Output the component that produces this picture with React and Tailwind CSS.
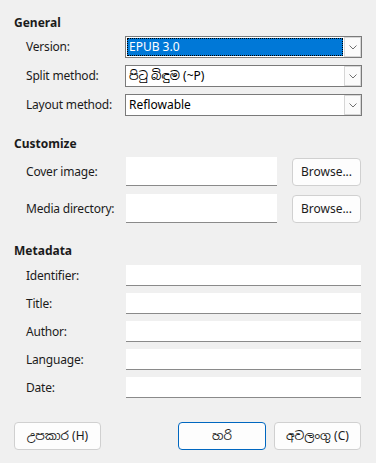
import React from "react";

const font = { fontFamily: '"Noto Sans", "Noto Sans Sinhala", "Liberation Sans", sans-serif' };

function Chevron() {
  return (
    <svg width="8" height="5" viewBox="0 0 8 5" className="block">
      <path d="M0.5 0.5 L4 4 L7.5 0.5" fill="none" stroke="#707070" strokeWidth="1" />
    </svg>
  );
}

function Combo({ value, selected }) {
  return (
    <div className="flex h-[22px] w-[237px] shrink-0 border border-[#7a7a7a] bg-white">
      <div className="flex flex-1 p-px">
        {selected ? (
          <div className="flex flex-1 items-center border border-dotted border-black bg-[#0078d7] pl-[1px] text-white">
            {value}
          </div>
        ) : (
          <div className="flex flex-1 items-center pl-[2px] text-black">{value}</div>
        )}
      </div>
      <div className="flex w-[17px] items-center justify-center border-y border-r border-l border-[#d6d6d6] bg-[#fbfbfb]">
        <Chevron />
      </div>
    </div>
  );
}

function Row({ label, children }) {
  return (
    <div className="flex items-center">
      <div className="w-[125px] shrink-0 whitespace-nowrap pl-[26px] text-[12px] tracking-[-0.2px] text-[#1b1b1b]">
        {label}
      </div>
      {children}
    </div>
  );
}

function Input({ w, h }) {
  return <div className={`${w} ${h} shrink-0 border-b border-[#8a8a8a] bg-white`} />;
}

function Btn({ children, w, primary }) {
  return (
    <div
      className={`flex h-[28px] ${w} shrink-0 items-center justify-center whitespace-nowrap rounded-[4px] border text-[12px] ${
        primary ? "border-[#0067c0] bg-[#fdfdfd]" : "border-[#d0d0d0] bg-[#fdfdfd]"
      } text-[#1b1b1b]`}
    >
      {children}
    </div>
  );
}

export default function App() {
  return (
    <div className="h-[463px] w-[376px] overflow-hidden bg-[#f0f0f0] text-[12px] leading-[16px] text-[#1b1b1b]" style={font}>
      <div className="flex flex-col pt-[15px]">
        <div className="pl-[14px] font-bold">General</div>
        <div className="mt-[5px] flex flex-col gap-[7px]">
          <Row label="Version:">
            <Combo value="EPUB 3.0" selected />
          </Row>
          <Row label="Split method:">
            <Combo value="පිටු බිඳුම (~P)" />
          </Row>
          <Row label="Layout method:">
            <Combo value="Reflowable" />
          </Row>
        </div>

        <div className="mt-[20px] pl-[14px] font-bold">Customize</div>
        <div className="mt-[5px] flex flex-col gap-[8px]">
          <Row label="Cover image:">
            <Input w="w-[151px] ml-[1px]" h="h-[29px]" />
            <div className="ml-[15px]">
              <Btn w="w-[69px]">Browse...</Btn>
            </div>
          </Row>
          <Row label="Media directory:">
            <Input w="w-[151px] ml-[1px]" h="h-[29px]" />
            <div className="ml-[15px]">
              <Btn w="w-[69px]">Browse...</Btn>
            </div>
          </Row>
        </div>

        <div className="mt-[20px] pl-[14px] font-bold">Metadata</div>
        <div className="mt-[6px] flex flex-col gap-[7px]">
          {["Identifier:", "Title:", "Author:", "Language:", "Date:"].map((l) => (
            <Row key={l} label={l}>
              <Input w="w-[235px] ml-[1px]" h="h-[21px]" />
            </Row>
          ))}
        </div>

        <div className="mt-[24px] flex pl-[14px]">
          <Btn w="w-[87px]">උපකාර (H)</Btn>
          <div className="ml-[77px]">
            <Btn w="w-[88px]" primary>
              හරි
            </Btn>
          </div>
          <div className="ml-[8px]">
            <Btn w="w-[87px]">අවලංගු (C)</Btn>
          </div>
        </div>
      </div>
    </div>
  );
}
